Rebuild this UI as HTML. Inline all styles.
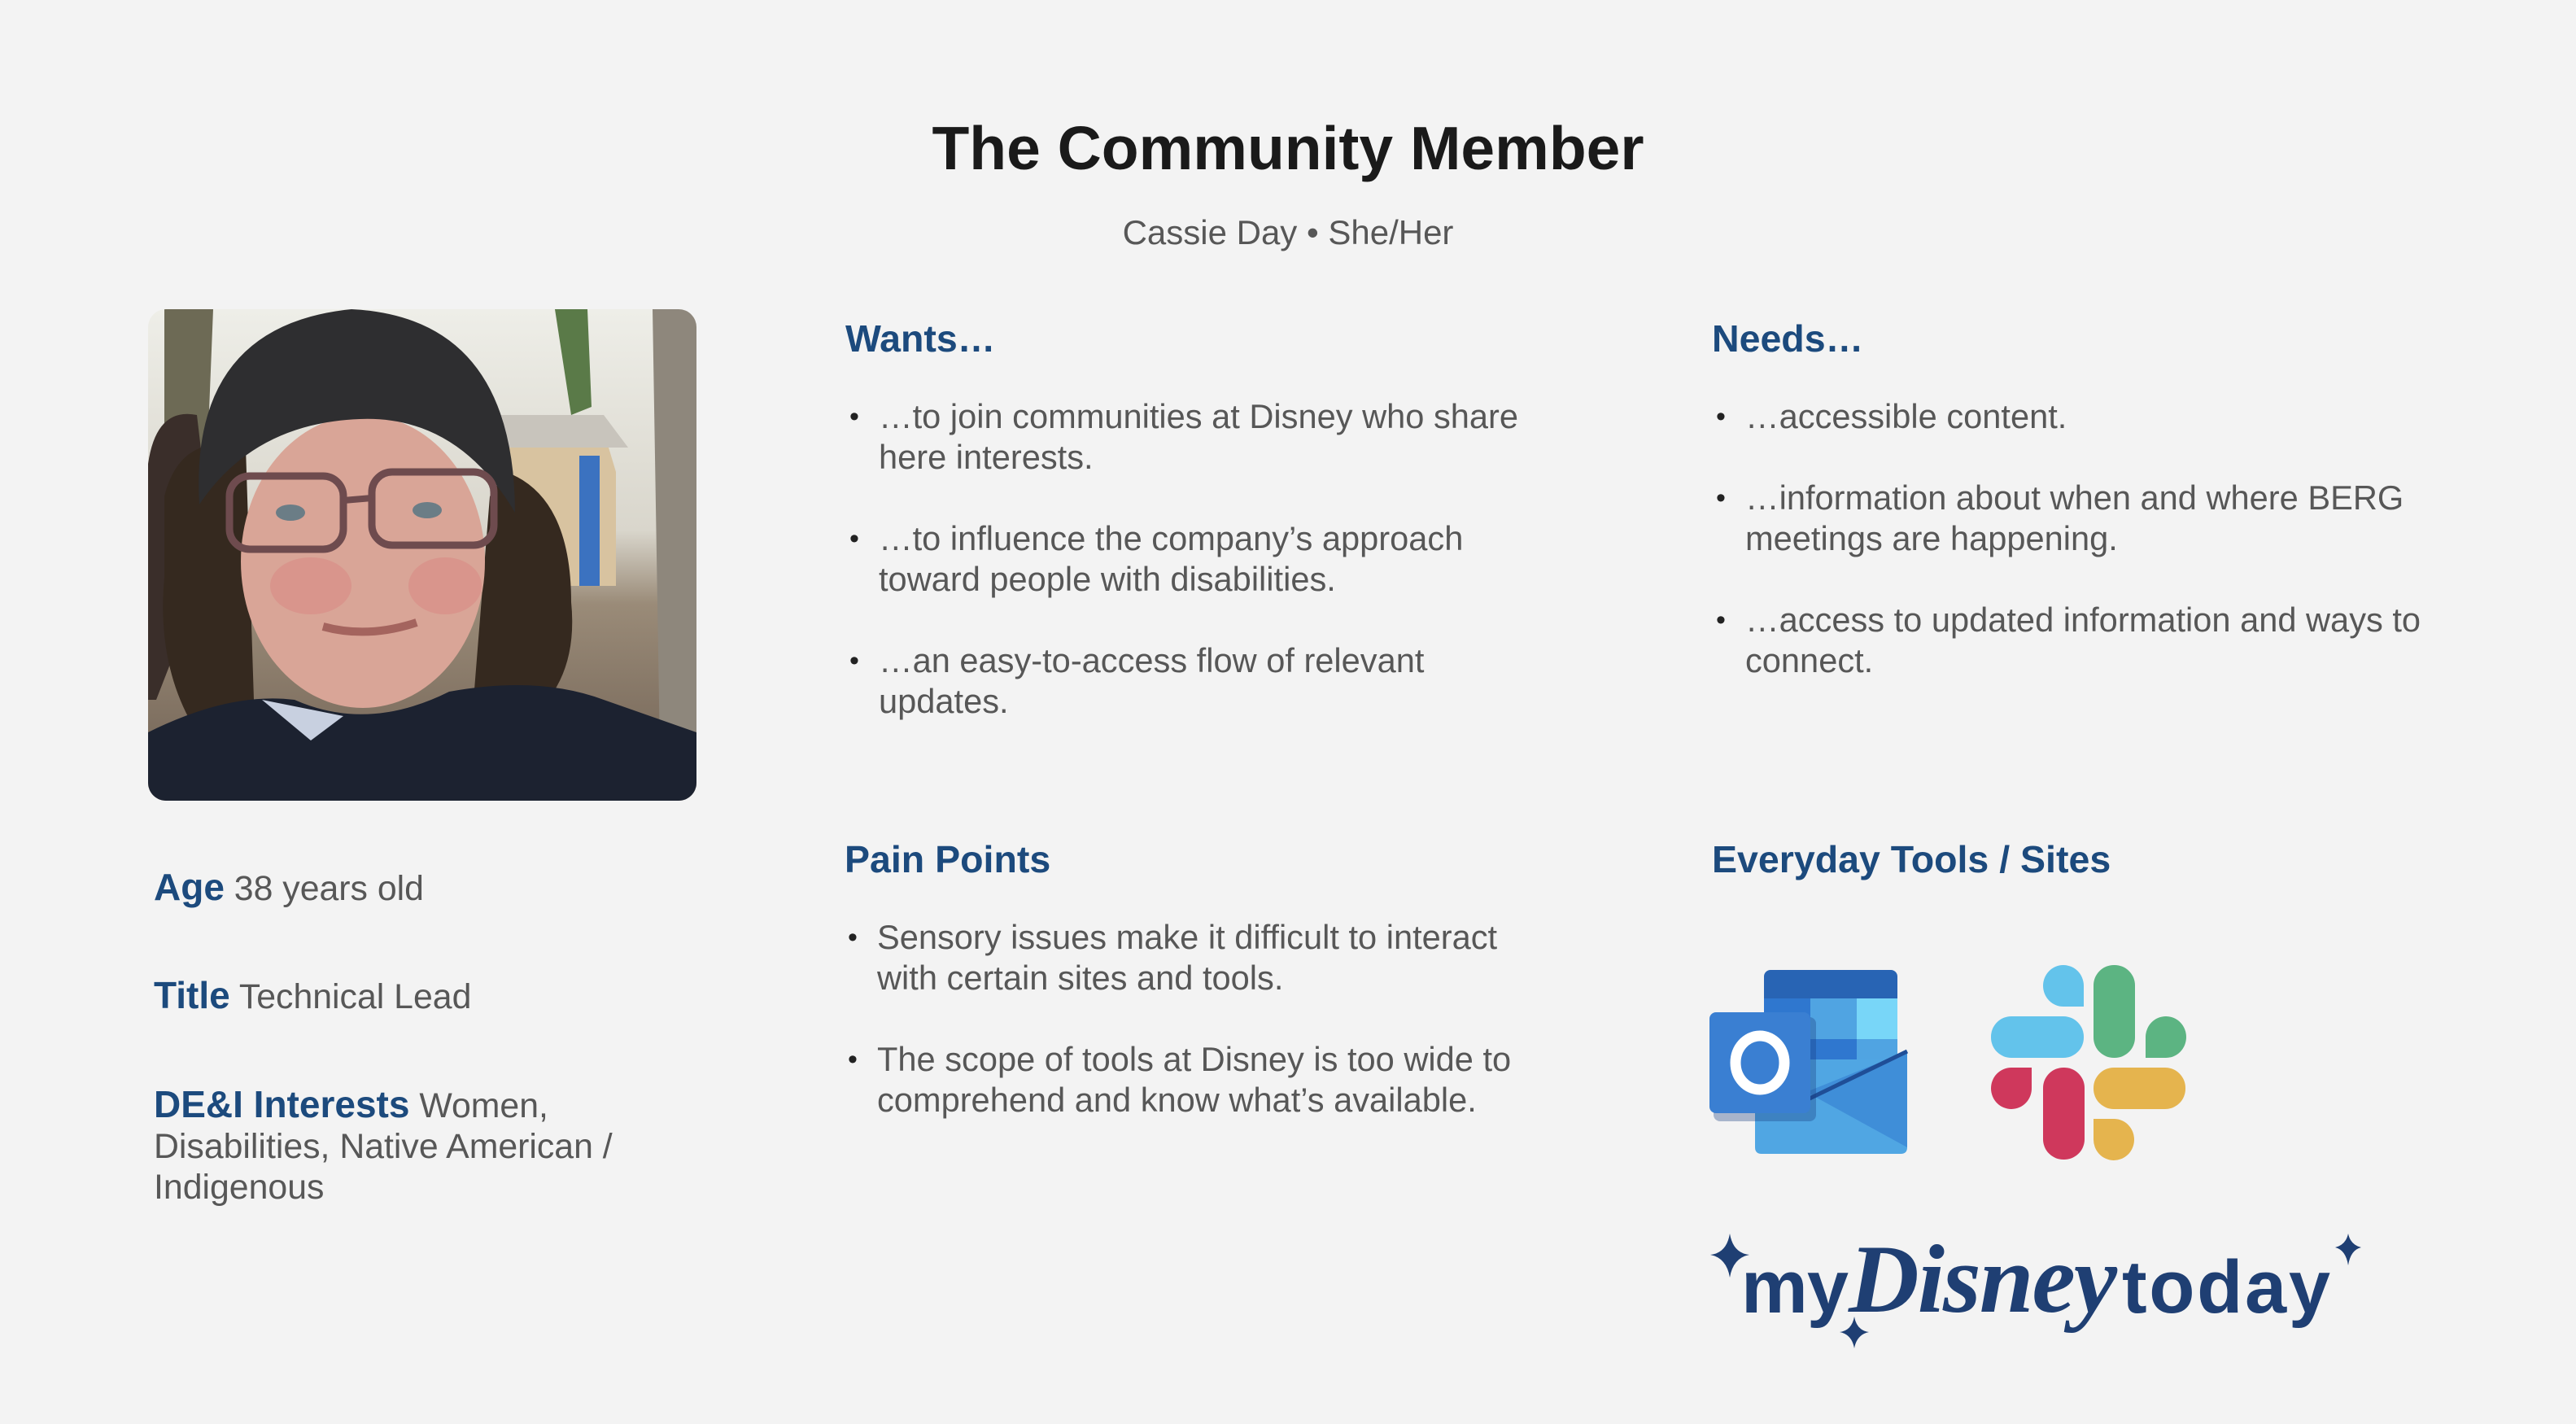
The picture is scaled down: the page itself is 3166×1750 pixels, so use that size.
<!DOCTYPE html>
<html><head><meta charset="utf-8"><style>
*{margin:0;padding:0;box-sizing:border-box}
body{width:3166px;height:1750px;background:#f3f3f3;position:relative;overflow:hidden;font-family:"Liberation Sans",Arial,sans-serif;color:#575757}
.a{position:absolute;white-space:nowrap}
h1{position:absolute;left:0;width:3166px;top:144px;text-align:center;font-size:75px;line-height:76px;font-weight:bold;color:#1a1a1a}
.sub{left:0;width:3166px;top:261px;text-align:center;font-size:42px;line-height:50px}
h2{position:absolute;font-size:46.5px;line-height:50px;font-weight:bold;color:#1c4a7d}
ul{position:absolute;list-style:none;font-size:41.6px;line-height:50px;white-space:nowrap}
li{position:relative;padding-left:36px;margin-bottom:50px}
li:before{content:"•";position:absolute;left:0;top:0;font-size:34px;color:#222}
.lab{font-size:42.8px;line-height:50px}
.lab b{color:#1c4a7d;font-size:46px}
</style></head><body>
<h1>The Community Member</h1>
<div class="a sub">Cassie Day • She/Her</div>

<svg class="a" style="left:182px;top:380px" width="674" height="604" viewBox="0 0 674 604">
<defs><clipPath id="c"><rect width="674" height="604" rx="22"/></clipPath>
<linearGradient id="bg" x1="0" y1="0" x2="0" y2="1"><stop offset="0" stop-color="#eeeee8"/><stop offset=".45" stop-color="#d9d6cc"/><stop offset=".6" stop-color="#9a8b78"/><stop offset="1" stop-color="#6e5f52"/></linearGradient></defs>
<g clip-path="url(#c)">
<rect width="674" height="604" fill="url(#bg)"/>
<path d="M20 0 L80 0 L70 250 L20 260Z" fill="#6d6a55"/>
<path d="M500 0 L540 0 L545 120 L520 130Z" fill="#5a7a48"/>
<path d="M440 150 L560 150 L575 200 L575 340 L450 340Z" fill="#d8c3a0"/>
<path d="M430 130 L560 130 L590 170 L420 170Z" fill="#c8c4bc"/>
<rect x="530" y="180" width="25" height="160" fill="#3b72c0"/>
<path d="M620 0 L674 0 L674 604 L630 604Z" fill="#8e877c"/>
<path d="M0 190 Q10 120 60 130 L80 300 L10 480 L0 480Z" fill="#3a2e2a"/>
<path d="M20 230 Q40 150 120 170 L130 480 L60 520 Q10 440 20 330Z" fill="#35291f"/>
<path d="M440 200 Q520 230 520 360 Q530 460 460 510 L400 480 L420 230Z" fill="#35291f"/>
<ellipse cx="264" cy="310" rx="150" ry="180" fill="#d9a597"/>
<ellipse cx="200" cy="340" rx="50" ry="35" fill="#d98a86" opacity=".6"/>
<ellipse cx="365" cy="340" rx="45" ry="35" fill="#d98a86" opacity=".6"/>
<path d="M63 240 Q50 20 250 0 Q450 10 451 250 Q380 130 260 135 Q130 140 63 240Z" fill="#2e2e30"/>
<rect x="100" y="205" width="140" height="90" rx="25" fill="none" stroke="#6e4b4e" stroke-width="9"/>
<rect x="275" y="200" width="150" height="90" rx="25" fill="none" stroke="#6e4b4e" stroke-width="9"/>
<path d="M240 235 L275 232" stroke="#6e4b4e" stroke-width="8"/>
<ellipse cx="175" cy="250" rx="18" ry="10" fill="#6b7d86"/><ellipse cx="343" cy="247" rx="18" ry="10" fill="#6b7d86"/>
<path d="M215 390 Q270 405 330 385" stroke="#a4645e" stroke-width="10" fill="none"/>
<path d="M0 520 Q100 470 180 480 Q270 520 370 470 Q480 450 560 480 L674 520 L674 604 L0 604Z" fill="#1c2230"/>
<path d="M140 480 L200 530 L240 500Z" fill="#c8d0e0"/>
</g></svg>

<div class="a lab" style="left:189px;top:1065px"><b>Age</b> 38 years old</div>
<div class="a lab" style="left:189px;top:1198px"><b>Title</b> Technical Lead</div>
<div class="a lab" style="left:189px;top:1332px"><b>DE&amp;I Interests</b> Women,<br>Disabilities, Native American /<br>Indigenous</div>

<h2 style="left:1039px;top:391px">Wants…</h2>
<ul style="left:1044px;top:487px">
<li>…to join communities at Disney who share<br>here interests.</li>
<li>…to influence the company’s approach<br>toward people with disabilities.</li>
<li>…an easy-to-access flow of relevant<br>updates.</li>
</ul>

<h2 style="left:2104px;top:391px">Needs…</h2>
<ul style="left:2109px;top:487px">
<li>…accessible content.</li>
<li>…information about when and where BERG<br>meetings are happening.</li>
<li>…access to updated information and ways to<br>connect.</li>
</ul>

<h2 style="left:1038px;top:1031px">Pain Points</h2>
<ul style="left:1042px;top:1127px">
<li>Sensory issues make it difficult to interact<br>with certain sites and tools.</li>
<li>The scope of tools at Disney is too wide to<br>comprehend and know what’s available.</li>
</ul>

<h2 style="left:2104px;top:1031px">Everyday Tools / Sites</h2>

<svg class="a" style="left:2100px;top:1192px" width="246" height="228" viewBox="0 0 246 228">
<rect x="68" y="0" width="164" height="60" rx="8" fill="#2864b4"/>
<rect x="68" y="35" width="57" height="50" fill="#2f77cf"/><rect x="125" y="35" width="57" height="50" fill="#50a4e2"/><rect x="182" y="35" width="50" height="50" fill="#78d6f8"/>
<rect x="68" y="85" width="57" height="50" fill="#2f77cf"/><rect x="125" y="85" width="57" height="50" fill="#2f77cf"/><rect x="182" y="85" width="50" height="50" fill="#50a4e2"/>
<rect x="68" y="135" width="114" height="30" fill="#2864b4"/>
<path d="M57 110 L244 110 L244 218 Q244 226 236 226 L65 226 Q57 226 57 218Z" fill="#50a6e3"/>
<path d="M244 100 L244 218 L120 150 Z" fill="#3f8ed8"/>
<path d="M57 110 L120 160 L244 100" fill="none" stroke="#1f4e97" stroke-width="5"/>
<rect x="6" y="58" width="126" height="128" rx="8" fill="#1a3f80" opacity=".35"/>
<rect x="1" y="52" width="124" height="124" rx="8" fill="#3a7fd2"/>
<ellipse cx="63" cy="114" rx="30" ry="33" fill="none" stroke="#fff" stroke-width="13"/>
</svg>

<svg class="a" style="left:2440px;top:1180px" width="260" height="255" viewBox="2440 1180 260 255">
<path d="M2561 1237 L2536 1237 A25 25.5 0 1 1 2561 1211Z" fill="#63c3eb"/>
<rect x="2447" y="1249" width="114" height="51" rx="25" fill="#63c3eb"/>
<rect x="2573" y="1186" width="51" height="114" rx="25" fill="#5cb482"/>
<path d="M2637 1300 L2637 1274 A25 25.5 0 1 1 2662 1300Z" fill="#5cb482"/>
<path d="M2497 1312 L2497 1337 A25 25.5 0 1 1 2472 1312Z" fill="#cf385c"/>
<rect x="2511" y="1312" width="51" height="113" rx="25" fill="#cf385c"/>
<rect x="2573" y="1312" width="113" height="51" rx="25" fill="#e5b44e"/>
<path d="M2573 1375 L2599 1375 A25 25.5 0 1 1 2573 1400Z" fill="#e5b44e"/>
</svg>

<svg class="a" style="left:2090px;top:1500px" width="830" height="170" viewBox="2090 1500 830 170">
<g fill="#1f3f73">
<path d="M2126 1516 Q2130 1540 2150 1542 Q2130 1546 2126 1570 Q2122 1546 2102 1542 Q2122 1540 2126 1516Z"/>
<path d="M2279 1618 Q2282 1635 2297 1637 Q2282 1640 2279 1657 Q2276 1640 2261 1637 Q2276 1635 2279 1618Z"/>
<path d="M2886 1516 Q2889 1530 2902 1533 Q2889 1536 2886 1555 Q2883 1536 2870 1533 Q2883 1530 2886 1516Z"/>
<text x="2140" y="1613" font-family="Liberation Sans,sans-serif" font-weight="bold" font-size="92" textLength="132">my</text>
<text x="2272" y="1612" font-family="Liberation Serif,serif" font-style="italic" font-weight="bold" font-size="120" textLength="330">Disney</text>
<text x="2608" y="1613" font-family="Liberation Sans,sans-serif" font-weight="bold" font-size="92" textLength="256">today</text>
</g></svg>
</body></html>
